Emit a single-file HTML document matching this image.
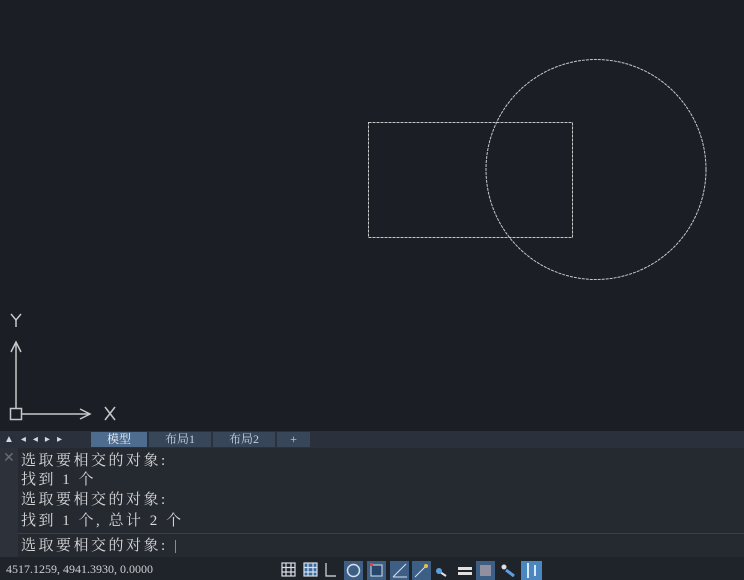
<!DOCTYPE html>
<html><head><meta charset="utf-8"><style>
body{margin:0;width:744px;height:580px;overflow:hidden;background:#1b1e25;font-family:"Liberation Serif","Noto Serif CJK SC",serif;position:relative}
.abs{position:absolute}
#tabs{left:0;top:431px;width:744px;height:17px;background:#2a313c}
.tab{position:absolute;top:1px;height:15px;background:#38465a;color:#c8d0dc;font-size:12px;line-height:15px;text-align:center}
#cmd{left:0;top:448px;width:744px;height:109px;background:#252930}
.ln{position:absolute;left:21px;color:#dadada;font-size:15px;line-height:18px;white-space:pre;letter-spacing:2.5px}
#status{left:0;top:557px;width:744px;height:23px;background:#1f232a}
</style></head><body>
<svg class="abs" style="left:0;top:0" width="744" height="431">
<rect x="368.5" y="122.5" width="204" height="115" fill="none" stroke="#c8c8c8" stroke-width="1" stroke-dasharray="3 1"/>
<circle cx="596" cy="169.5" r="110" fill="none" stroke="#c8c8c8" stroke-width="1" stroke-dasharray="3 1"/>
<g stroke="#c8c8c8" stroke-width="1.5" fill="none">
<rect x="10.5" y="408.5" width="11" height="11"/>
<line x1="16" y1="408" x2="16" y2="342"/>
<polyline points="11,352 16,342 21,352"/>
<line x1="22" y1="414" x2="90" y2="414"/>
<polyline points="80,409 90,414 80,419"/>
<polyline points="11,314 16,320 21,314"/><line x1="16" y1="320" x2="16" y2="327"/>
<line x1="105" y1="407" x2="115" y2="420"/><line x1="115" y1="407" x2="105" y2="420"/>
</g>
</svg>
<div id="tabs" class="abs">
<div style="position:absolute;left:4px;top:1px;color:#d0d8e0;font-size:10px;line-height:15px;letter-spacing:7px">▲◂◂▸▸</div>
<div class="tab" style="left:91px;width:56px;background:#4e6c8e;color:#e8eef4">模型</div>
<div class="tab" style="left:149px;width:62px">布局1</div>
<div class="tab" style="left:213px;width:62px">布局2</div>
<div class="tab" style="left:277px;width:33px">+</div>
</div>
<div id="cmd" class="abs">
<div style="position:absolute;left:0;top:0;width:18px;height:109px;background:#2d323a"></div>
<div style="position:absolute;left:3px;top:2px;color:#6a707a;font-size:14px">✕</div>
<div class="ln" style="top:4px">选取要相交的对象:</div>
<div class="ln" style="top:23px">找到 1 个</div>
<div class="ln" style="top:43px">选取要相交的对象:</div>
<div class="ln" style="top:64px">找到 1 个, 总计 2 个</div>
<div style="position:absolute;left:18px;top:85px;width:726px;height:1px;background:#3a3f48"></div>
<div class="ln" style="top:89px">选取要相交的对象: <span style="color:#aaa">|</span></div>
</div>
<div id="status" class="abs">
<div style="position:absolute;left:6px;top:5px;color:#d0d0d0;font-size:12px">4517.1259, 4941.3930, 0.0000</div>
</div>
<svg class="abs" style="left:280px;top:560px" width="270" height="20">
<g fill="none" stroke="#d8e0ea" stroke-width="1.2">
<rect x="2" y="3" width="13" height="13"/><path d="M6 3V16M11 3V16M2 7.5H15M2 12H15"/>
<rect x="24" y="3" width="13" height="13" fill="#3a6aa0"/><path d="M28 3V16M33 3V16M24 7.5H37M24 12H37"/>
<path d="M46 3V16H56"/>
</g>
<rect x="64" y="1" width="19" height="19" fill="#3d5f86"/>
<circle cx="73.5" cy="10.5" r="6" fill="none" stroke="#d8e0ea" stroke-width="1.5"/>
<rect x="87" y="1" width="19" height="19" fill="#3d5f86"/><rect x="91" y="5" width="11" height="11" fill="#26466c" stroke="#d8e0ea"/><rect x="90" y="3" width="3" height="3" fill="#e04040"/>
<rect x="110" y="1" width="19" height="19" fill="#3d5f86"/><path d="M113 17L126 4M113 17H127" stroke="#d8e0ea" fill="none"/>
<rect x="132" y="1" width="19" height="19" fill="#3d5f86"/><path d="M135 17L146 6" stroke="#d8e0ea"/><circle cx="146" cy="6" r="2" fill="#e8c040"/>
<path d="M157 10L166 16" stroke="#d8e0ea" stroke-width="2"/><circle cx="159" cy="11" r="3" fill="#5aa0e0"/>
<rect x="178" y="7" width="14" height="3" fill="#e0e0e0"/><rect x="178" y="12" width="14" height="3" fill="#e0e0e0"/>
<rect x="196" y="1" width="19" height="19" fill="#3d5f86"/><rect x="200" y="5" width="11" height="11" fill="#9090a0"/>
<circle cx="224" cy="7" r="2.5" fill="#e0e0e0"/><path d="M226 10L234 16" stroke="#5aa0e0" stroke-width="3"/>
<rect x="241" y="1" width="21" height="19" fill="#4a86c0"/><path d="M248 3V18M255 5V16" stroke="#d8e8f4" stroke-width="2"/>
</svg>
</body></html>
